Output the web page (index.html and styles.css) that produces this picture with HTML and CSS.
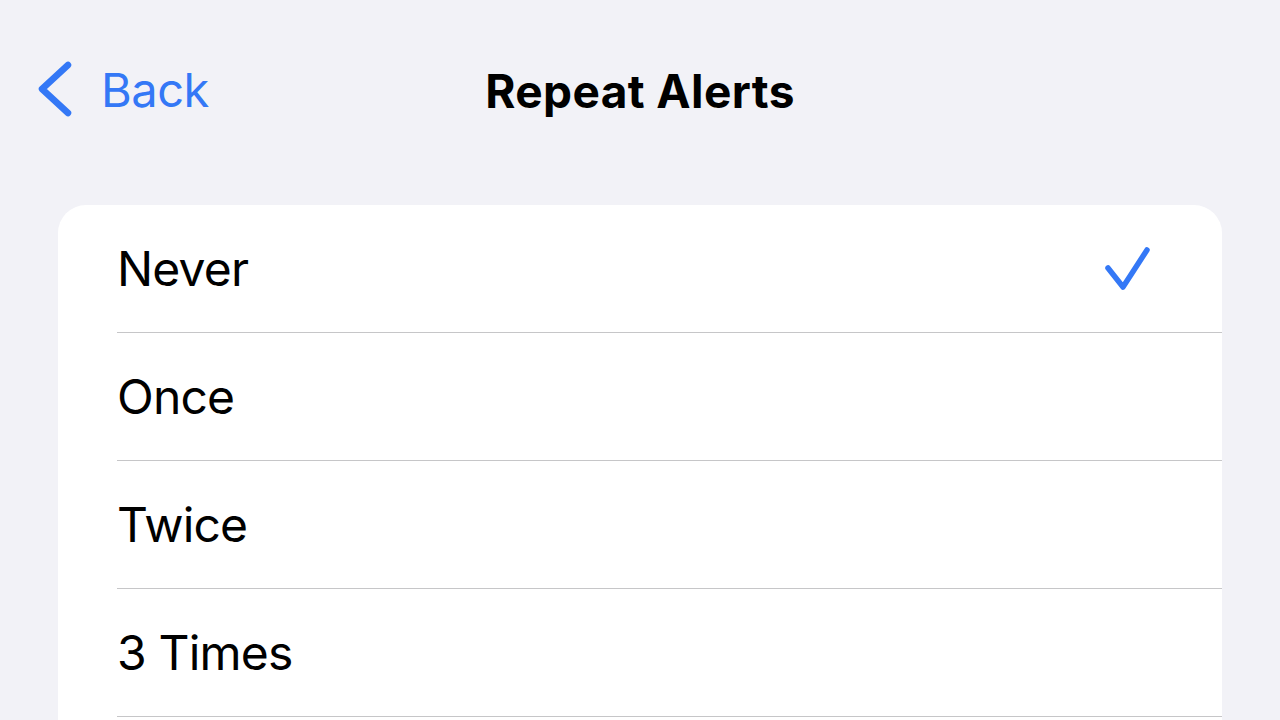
FILE: index.html
```html
<!DOCTYPE html>
<html lang="en">
<head>
<meta charset="utf-8">
<title>Repeat Alerts</title>
<link rel="stylesheet" href="styles.css">
</head>
<body>
<header class="nav">
  <a class="back" href="#">
    <svg class="chevron" width="40" height="60" viewBox="0 0 40 60" aria-hidden="true">
      <path d="M32 6 L6 30 L32 54" fill="none" stroke="#3478f6" stroke-width="6.5" stroke-linecap="round" stroke-linejoin="round"/>
    </svg>
    <span class="back-label">Back</span>
  </a>
  <h1 class="title">Repeat Alerts</h1>
</header>
<main class="list">
  <div class="row"><span class="label">Never</span>
    <svg class="check" width="52" height="50" viewBox="0 0 52 50" aria-hidden="true">
      <path d="M8 24 L23 43 L47 6" fill="none" stroke="#3478f6" stroke-width="5.5" stroke-linecap="round" stroke-linejoin="round"/>
    </svg>
  </div>
  <div class="row"><span class="label">Once</span></div>
  <div class="row"><span class="label">Twice</span></div>
  <div class="row"><span class="label">3 Times</span></div>
</main>
</body>
</html>
```
FILE: styles.css
```css
html, body {
  margin: 0;
  padding: 0;
}
body {
  background: #f2f2f7;
  font-family: Inter, "Liberation Sans", sans-serif;
  color: #000;
  width: 1280px;
  height: 720px;
  overflow: hidden;
  display: flex;
  flex-direction: column;
}
.nav {
  position: relative;
  height: 182px;
  flex: none;
  display: flex;
  align-items: center;
  justify-content: center;
  margin-bottom: 23px;
}
.back {
  position: absolute;
  left: 36px;
  top: 0;
  height: 178px;
  display: flex;
  align-items: center;
  gap: 25px;
  color: #3478f6;
  text-decoration: none;
}
.back-label {
  font-size: 47px;
  font-weight: 400;
  letter-spacing: -0.5px;
}
.title {
  margin: 0;
  font-size: 46px;
  font-weight: 700;
  letter-spacing: 0.4px;
}
.list {
  flex: 1;
  margin: 0 58px;
  background: #fff;
  border-radius: 28px 28px 0 0;
}
.row {
  height: 127px;
  margin-left: 59px;
  padding-right: 70px;
  display: flex;
  align-items: center;
  justify-content: space-between;
  border-bottom: 1px solid #c6c6c8;
}
.label {
  font-size: 48px;
  font-weight: 400;
  letter-spacing: -0.8px;
}
.check {
  display: block;
}
```
